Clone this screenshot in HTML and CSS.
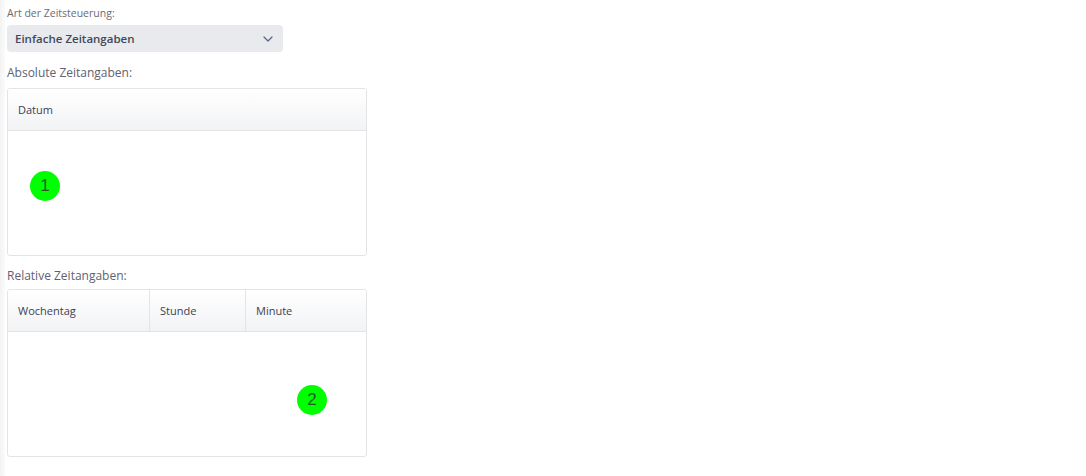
FILE: index.html
```html
<!DOCTYPE html>
<html lang="de">
<head>
<meta charset="utf-8">
<title>Zeitsteuerung</title>
<link rel="stylesheet" href="styles.css">
</head>
<body>
<div class="edge"></div>
<main class="page">
  <div class="field">
    <label class="label-small">Art der Zeitsteuerung:</label>
    <div class="select">
      <span>Einfache Zeitangaben</span>
      <svg class="chev" width="10" height="6" viewBox="0 0 10 6"><path d="M1 1l4 4 4-4" fill="none" stroke="#5b6478" stroke-width="1.2" stroke-linecap="round" stroke-linejoin="round"/></svg>
    </div>
  </div>

  <div class="section">
    <div class="label">Absolute Zeitangaben:</div>
    <div class="table">
      <div class="thead">
        <div class="th">Datum</div>
      </div>
      <div class="tbody">
        <span class="badge b1">1</span>
      </div>
    </div>
  </div>

  <div class="section second">
    <div class="label">Relative Zeitangaben:</div>
    <div class="table">
      <div class="thead cols3">
        <div class="th">Wochentag</div>
        <div class="th">Stunde</div>
        <div class="th">Minute</div>
      </div>
      <div class="tbody">
        <span class="badge b2">2</span>
      </div>
    </div>
  </div>
</main>
</body>
</html>
```

FILE: styles.css
```css
html, body {
  margin: 0;
  padding: 0;
  background: #ffffff;
  height: 100%;
}
body {
  font-family: "Open Sans", "Noto Sans", sans-serif;
  position: relative;
}
.edge {
  position: absolute;
  left: 0;
  top: 0;
  bottom: 0;
  width: 5px;
  background: linear-gradient(to right, #f3f3f3, #fbfbfb);
}
.page {
  padding: 5px 0 0 7px;
  width: 360px;
  display: flex;
  flex-direction: column;
}
.label-small {
  display: block;
  font-size: 10.5px;
  line-height: 16px;
  color: #6b6b72;
  margin-bottom: 4px;
}
.select {
  width: 276px;
  height: 27px;
  box-sizing: border-box;
  background: #e8eaee;
  border-radius: 4px;
  display: flex;
  align-items: center;
  justify-content: space-between;
  padding: 0 10px 0 8px;
  font-size: 11.5px;
  font-weight: 600;
  color: #434859;
}
.chev {
  display: block;
}
.section {
  margin-top: 13px;
}
.section.second {
  margin-top: 12px;
}
.label {
  font-size: 12px;
  line-height: 16px;
  color: #616170;
  margin-bottom: 7px;
}
.second .label {
  margin-bottom: 5px;
}
.table {
  border: 1px solid #e2e4e8;
  border-radius: 3px;
  height: 168px;
  box-sizing: border-box;
  display: flex;
  flex-direction: column;
  overflow: hidden;
}
.thead {
  height: 42px;
  flex: none;
  display: flex;
  background: linear-gradient(to bottom, #ffffff, #f2f3f5);
  border-bottom: 1px solid #e2e4e8;
  box-sizing: border-box;
}
.th {
  font-size: 11px;
  color: #3c4152;
  padding: 0 10px;
  display: flex;
  align-items: center;
  flex: 1;
  box-sizing: border-box;
}
.cols3 .th:nth-child(1) { flex: none; width: 142px; border-right: 1px solid #e2e4e8; }
.cols3 .th:nth-child(2) { flex: none; width: 96px; border-right: 1px solid #e2e4e8; }
.tbody {
  flex: 1;
  position: relative;
}
.badge {
  position: absolute;
  width: 30px;
  height: 30px;
  border-radius: 50%;
  background: #00ff00;
  color: #1f5a1f;
  font-size: 17px;
  display: flex;
  align-items: center;
  justify-content: center;
  font-family: "Liberation Sans", sans-serif;
}
.b1 { left: 22px; top: 40px; }
.b2 { left: 289px; top: 53px; }
```
